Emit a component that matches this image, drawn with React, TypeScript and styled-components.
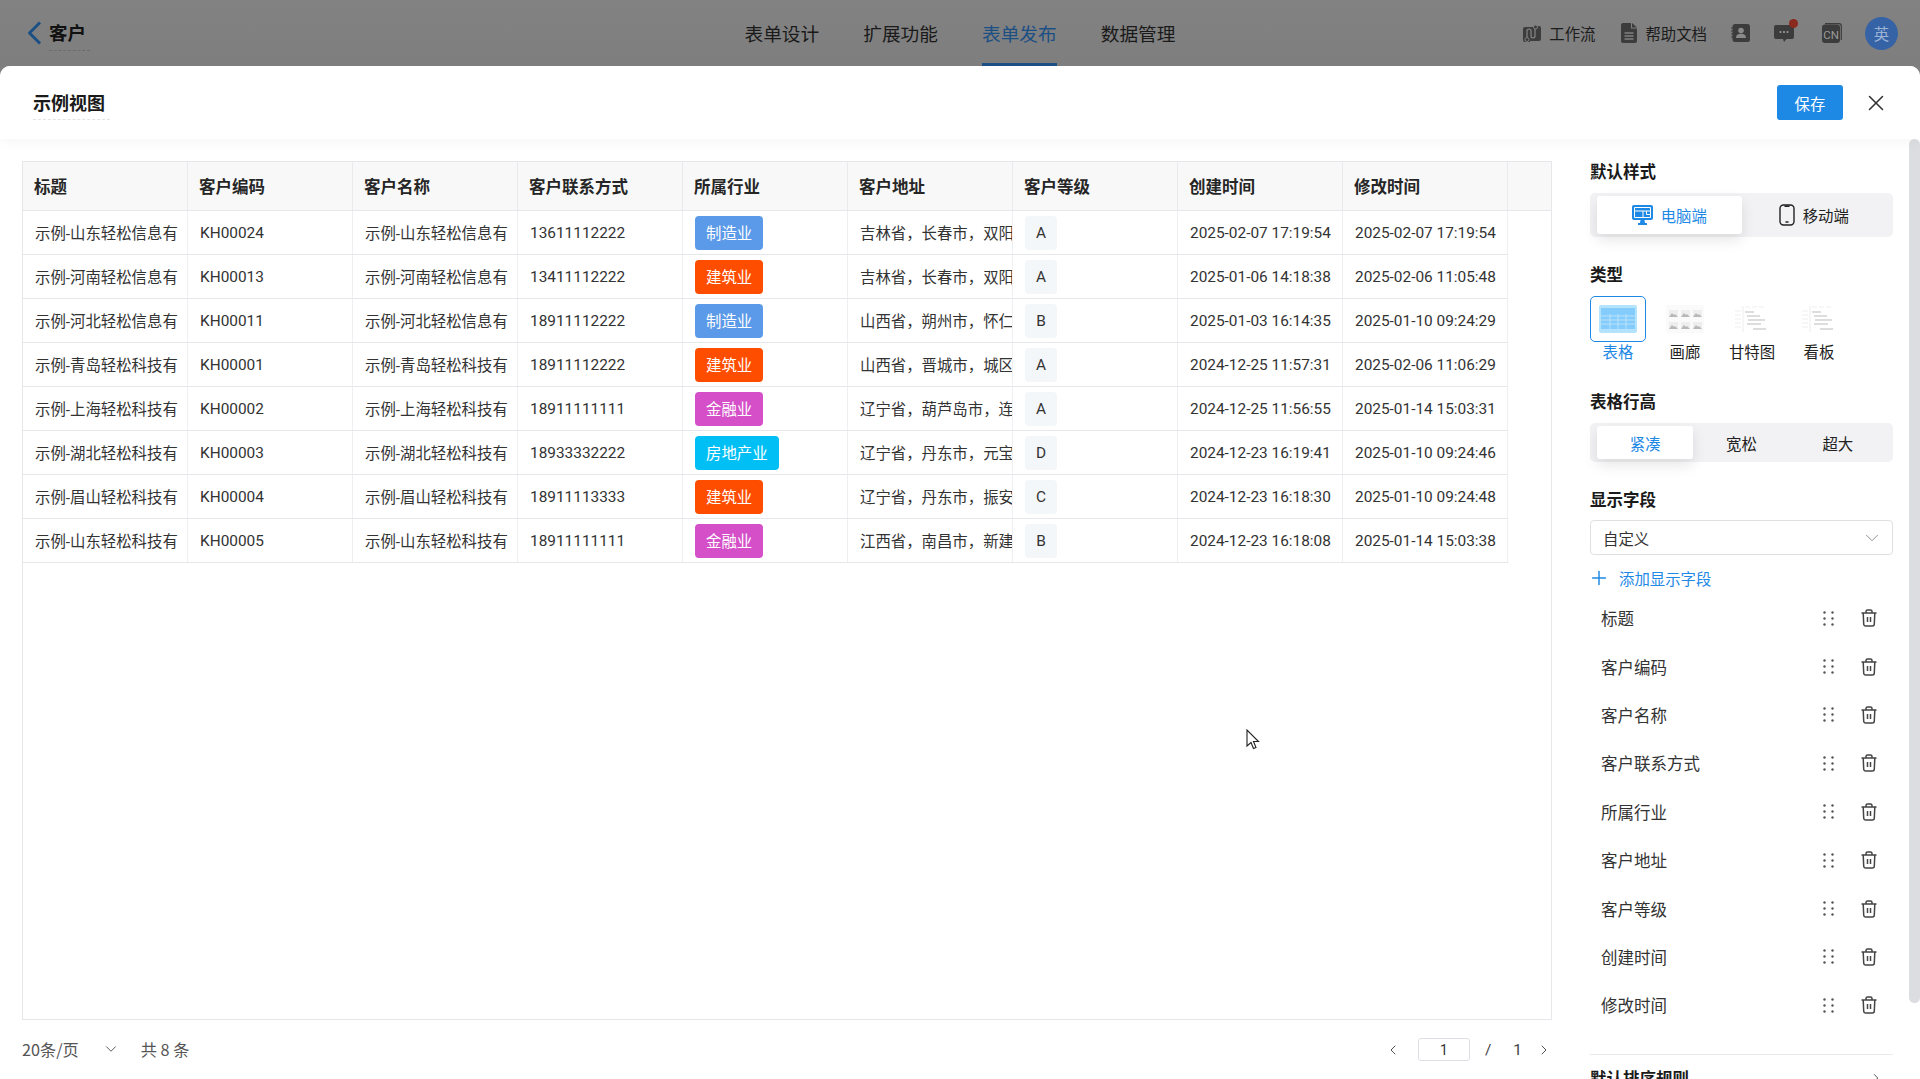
import React from 'react'
import styled, { createGlobalStyle } from 'styled-components'
import { ChevronDown, ChevronLeft, ChevronRight, Plus, X } from 'lucide-react'

// ---------- data ----------

const COLUMNS = ['标题', '客户编码', '客户名称', '客户联系方式', '所属行业', '客户地址', '客户等级', '创建时间', '修改时间']

type Row = {
  title: string
  code: string
  name: string
  phone: string
  industry: string
  address: string
  level: string
  created: string
  updated: string
}

const TAG_COLORS: Record<string, string> = {
  制造业: '#5b9ae8',
  建筑业: '#ff4d00',
  金融业: '#d44fc8',
  房地产业: '#00bff5',
}

const ROWS: Row[] = [
  { title: '示例-山东轻松信息有', code: 'KH00024', name: '示例-山东轻松信息有', phone: '13611112222', industry: '制造业', address: '吉林省，长春市，双阳区', level: 'A', created: '2025-02-07 17:19:54', updated: '2025-02-07 17:19:54' },
  { title: '示例-河南轻松信息有', code: 'KH00013', name: '示例-河南轻松信息有', phone: '13411112222', industry: '建筑业', address: '吉林省，长春市，双阳区', level: 'A', created: '2025-01-06 14:18:38', updated: '2025-02-06 11:05:48' },
  { title: '示例-河北轻松信息有', code: 'KH00011', name: '示例-河北轻松信息有', phone: '18911112222', industry: '制造业', address: '山西省，朔州市，怀仁市', level: 'B', created: '2025-01-03 16:14:35', updated: '2025-01-10 09:24:29' },
  { title: '示例-青岛轻松科技有', code: 'KH00001', name: '示例-青岛轻松科技有', phone: '18911112222', industry: '建筑业', address: '山西省，晋城市，城区', level: 'A', created: '2024-12-25 11:57:31', updated: '2025-02-06 11:06:29' },
  { title: '示例-上海轻松科技有', code: 'KH00002', name: '示例-上海轻松科技有', phone: '18911111111', industry: '金融业', address: '辽宁省，葫芦岛市，连山区', level: 'A', created: '2024-12-25 11:56:55', updated: '2025-01-14 15:03:31' },
  { title: '示例-湖北轻松科技有', code: 'KH00003', name: '示例-湖北轻松科技有', phone: '18933332222', industry: '房地产业', address: '辽宁省，丹东市，元宝区', level: 'D', created: '2024-12-23 16:19:41', updated: '2025-01-10 09:24:46' },
  { title: '示例-眉山轻松科技有', code: 'KH00004', name: '示例-眉山轻松科技有', phone: '18911113333', industry: '建筑业', address: '辽宁省，丹东市，振安区', level: 'C', created: '2024-12-23 16:18:30', updated: '2025-01-10 09:24:48' },
  { title: '示例-山东轻松科技有', code: 'KH00005', name: '示例-山东轻松科技有', phone: '18911111111', industry: '金融业', address: '江西省，南昌市，新建区', level: 'B', created: '2024-12-23 16:18:08', updated: '2025-01-14 15:03:38' },
]

// ---------- global ----------

const GlobalStyle = createGlobalStyle`
  html, body {
    margin: 0;
    height: 100%;
    overflow: hidden;
  }
  body {
    font-family: Roboto, "Noto Sans CJK SC", sans-serif;
    color: #333;
    background: #fff;
  }
  * {
    box-sizing: border-box;
  }
`

const Page = styled.div`
  position: relative;
  display: flex;
  flex-direction: column;
  height: 1079px;
  overflow: hidden;
  background: #808080;
`

// ---------- top bar (dimmed behind the drawer) ----------

const TopBar = styled.header`
  display: grid;
  grid-template-columns: 1fr auto 1fr;
  align-items: center;
  flex: 0 0 66px;
  padding: 0 22px;
  background: linear-gradient(#828282, #7e7e7e);
  color: #1a1a1a;
`

const BackLink = styled.div`
  display: flex;
  align-items: center;
  gap: 7px;
  padding-left: 5px;
  color: #1c4f84;
`

const AppName = styled.span`
  min-width: 41px;
  margin-top: 7px;
  padding-bottom: 3px;
  border-bottom: 1px dashed #6c6c6c;
  font-size: 18.5px;
  font-weight: 700;
  line-height: 25px;
  color: #111;
`

const Tabs = styled.nav`
  display: flex;
  gap: 44px;
  height: 66px;
`

const Tab = styled.div<{ $active?: boolean }>`
  display: flex;
  align-items: center;
  height: 66px;
  padding-top: 2px;
  border-bottom: 3px solid ${(p) => (p.$active ? '#1c4f84' : 'transparent')};
  font-size: 18.7px;
  color: ${(p) => (p.$active ? '#1c4f84' : '#1a1a1a')};
`

const TopTools = styled.div`
  display: flex;
  align-items: center;
  justify-content: flex-end;
  color: #1c1c1c;
`

const ToolLink = styled.div<{ $gap: number }>`
  display: flex;
  align-items: center;
  gap: 8px;
  margin-right: ${(p) => p.$gap}px;
  font-size: 15.4px;
`

const ToolIcon = styled.div<{ $gap: number }>`
  position: relative;
  display: flex;
  margin-right: ${(p) => p.$gap}px;
`

const RedDot = styled.span`
  position: absolute;
  top: -6px;
  right: -4px;
  width: 9px;
  height: 9px;
  border-radius: 50%;
  background: #8a2a1e;
`

const Avatar = styled.div`
  display: flex;
  align-items: center;
  justify-content: center;
  width: 33px;
  height: 33px;
  border-radius: 50%;
  background: #3663a6;
  color: #9db3d6;
  font-size: 15.4px;
`

// ---------- drawer ----------

const Drawer = styled.main`
  display: flex;
  flex-direction: column;
  flex: 1;
  min-height: 0;
  border-radius: 10px 10px 0 0;
  background: #fff;
  overflow: hidden;
`

const DrawerHeader = styled.div`
  position: relative;
  z-index: 1;
  display: flex;
  align-items: center;
  justify-content: space-between;
  flex: 0 0 73px;
  padding: 0 33px;
  background: #fff;
  box-shadow: 0 3px 12px rgba(0, 0, 0, 0.04);
`

const DrawerTitle = styled.h1`
  min-width: 77px;
  margin: 5px 0 0;
  padding-bottom: 2px;
  border-bottom: 1px dashed #e3e3e3;
  font-size: 18px;
  font-weight: 700;
  line-height: 26px;
  color: #1a1a1a;
`

const HeaderActions = styled.div`
  display: flex;
  align-items: center;
  gap: 20px;
  margin-right: -2px;
  color: #333;
`

const SaveButton = styled.button`
  width: 66px;
  height: 35px;
  border: 0;
  border-radius: 3px;
  background: #1e88e5;
  color: #fff;
  font: inherit;
  font-size: 15.4px;
`

const DrawerBody = styled.div`
  position: relative;
  display: flex;
  flex: 1;
  min-height: 0;
`

// ---------- table ----------

const TableArea = styled.section`
  display: flex;
  flex-direction: column;
  flex: 0 0 1530px;
  margin-left: 22px;
  padding-top: 22px;
`

const TableFrame = styled.div`
  height: 860px;
  border: 1px solid #e6e7ea;
`

const HeadRow = styled.div`
  display: flex;
  height: 49px;
  border-bottom: 1px solid #e6e7ea;
  background: #f8f8f8;
`

const HeadCell = styled.div`
  display: flex;
  align-items: center;
  flex: 0 0 165px;
  padding: 0 0 1px 11px;
  border-right: 1px solid #e9eaec;
  font-size: 16.5px;
  font-weight: 700;
  color: #262626;
`

const BodyRow = styled.div`
  display: flex;
  width: 1485px;
  height: 44px;
  border-bottom: 1px solid #e6e7ea;
`

const Cell = styled.div`
  display: flex;
  align-items: center;
  flex: 0 0 165px;
  padding-left: 12px;
  border-right: 1px solid #eeeff1;
  overflow: hidden;
  font-size: 15.4px;
  white-space: nowrap;
  color: #333;
`

// Chinese glyphs sit a little low in the line box
const TextCell = styled(Cell)`
  padding-bottom: 2px;
`

const Tag = styled.span<{ $color: string }>`
  display: flex;
  align-items: center;
  height: 34px;
  padding: 0 11px 2px;
  border-radius: 4px;
  background: ${(p) => p.$color};
  color: #fff;
`

const LevelTag = styled.span`
  display: flex;
  align-items: center;
  justify-content: center;
  width: 32px;
  height: 34px;
  border-radius: 4px;
  background: #f4f7fa;
  color: #333;
`

const TableFooter = styled.div`
  display: flex;
  align-items: center;
  justify-content: space-between;
  height: 59px;
  font-size: 16.2px;
  color: #555;
`

const FooterLeft = styled.div`
  display: flex;
  align-items: center;
  padding-bottom: 2px;
  font-family: "Noto Sans CJK SC", sans-serif;
`

const PageSize = styled.div`
  display: flex;
  align-items: center;
  gap: 23px;
  margin-right: 21px;
`

const Pager = styled.div`
  display: flex;
  align-items: center;
  color: #444;
`

const PagerInput = styled.div`
  display: flex;
  align-items: center;
  justify-content: center;
  width: 52px;
  height: 23px;
  margin: 0 15px 0 17px;
  border: 1px solid #dddfe5;
  border-radius: 3px;
  color: #333;
  font-size: 14px;
`

const PagerText = styled.span`
  font-size: 15.4px;
`

const PagerTotal = styled(PagerText)`
  margin: 0 14px 0 22px;
`

// ---------- side panel ----------

const SidePanel = styled.aside`
  flex: 1;
  height: 100%;
  padding: 22px 27px 0 38px;
  overflow: hidden;
  font-family: Inter, "Noto Sans CJK SC", sans-serif;
`

const ScrollThumb = styled.div`
  position: absolute;
  top: 0;
  right: 0;
  width: 11px;
  height: 864px;
  border-radius: 6px;
  background: #dcdde0;
`

const SectionTitle = styled.h3`
  margin: 0 0 10px;
  font-size: 16.5px;
  font-weight: 700;
  line-height: 22px;
  color: #1a1a1a;
`

const Segment = styled.div<{ $height: number; $columns: number }>`
  display: grid;
  grid-template-columns: repeat(${(p) => p.$columns}, 1fr);
  height: ${(p) => p.$height}px;
  margin-bottom: 27px;
  padding: 3px 7px;
  border-radius: 5px;
  background: #f2f2f4;
`

const SegmentItem = styled.div<{ $active?: boolean }>`
  display: flex;
  align-items: center;
  justify-content: center;
  gap: 8px;
  border-radius: 3px;
  background: ${(p) => (p.$active ? '#fff' : 'transparent')};
  box-shadow: ${(p) => (p.$active ? '0 6px 14px rgba(0, 0, 0, 0.1)' : 'none')};
  color: ${(p) => (p.$active ? '#1e88e5' : '#222')};
  font-size: 15.4px;
`

const TypeGrid = styled.div`
  display: grid;
  grid-template-columns: repeat(4, 56px);
  gap: 11px;
  margin-bottom: 27px;
`

const TypeItem = styled.div<{ $active?: boolean }>`
  display: flex;
  flex-direction: column;
  align-items: center;
  color: ${(p) => (p.$active ? '#1e88e5' : '#222')};
  font-size: 15.4px;
  line-height: 22px;
  white-space: nowrap;
`

const TypeCard = styled.div<{ $active?: boolean }>`
  display: flex;
  align-items: center;
  justify-content: center;
  width: 56px;
  height: 46px;
  border: 1px solid ${(p) => (p.$active ? '#1e88e5' : 'transparent')};
  border-radius: 5px;
`

const SelectBox = styled.div`
  display: flex;
  align-items: center;
  justify-content: space-between;
  height: 35px;
  margin-top: -1px;
  padding: 0 9px 0 12px;
  border: 1px solid #dfe0e4;
  border-radius: 4px;
  font-size: 15.4px;
  color: #333;
`

const AddField = styled.div`
  display: flex;
  align-items: center;
  gap: 9px;
  height: 33px;
  margin: 6px 0 0 -2px;
  color: #1e88e5;
  font-size: 15.4px;
`

const FieldRow = styled.div`
  display: flex;
  align-items: center;
  height: 48.4px;
  padding: 0 16px 0 11px;
  font-size: 16.5px;
  color: #333;
`

const FieldName = styled.span`
  flex: 1;
`

const HandleIcon = styled.svg`
  margin-right: 27px;
`

const Divider = styled.div`
  height: 1px;
  margin-top: 24px;
  background: #e9eaed;
`

const Collapse = styled.div`
  display: flex;
  align-items: center;
  justify-content: space-between;
  height: 46px;
  padding-right: 10px;
  color: #1a1a1a;
  font-size: 16.5px;
  font-weight: 700;
`

// ---------- free-floating mouse pointer in the shot ----------

const Pointer = styled.svg`
  position: absolute;
  left: 1245px;
  top: 729px;
`

// ---------- drawings ----------

const BackChevron = () => (
  <svg width="15" height="24" viewBox="0 0 15 24">
    <path d="M13 1.500L2.500 12 13 22.500" fill="none" stroke="currentColor" strokeWidth="3" strokeLinejoin="round" />
  </svg>
)

const WorkflowIcon = () => (
  <svg width="18" height="19" viewBox="0 0 18 19">
    <path d="M2 3h9v-1h5a2 2 0 0 1 2 2v11a2 2 0 0 1-2 2H7v1H2a2 2 0 0 1-2-2V5a2 2 0 0 1 2-2z" fill="#3c3c3c" />
    <path d="M4 15V7c0-2.500 4-2.500 4 0v5c0 2.500 4 2.500 4 0V4.500" fill="none" stroke="#808080" strokeWidth="1.300" />
    <circle cx="12.500" cy="3" r="2" fill="#3c3c3c" stroke="#808080" strokeWidth="1" />
    <circle cx="4" cy="15.500" r="2" fill="#3c3c3c" stroke="#808080" strokeWidth="1" />
  </svg>
)

const DocIcon = () => (
  <svg width="16" height="20" viewBox="0 0 16 20">
    <path d="M2 0h8v5.500h6V18a2 2 0 0 1-2 2H2a2 2 0 0 1-2-2V2a2 2 0 0 1 2-2z" fill="#3c3c3c" />
    <path d="M11 0l5 4.500h-5z" fill="#3c3c3c" />
    <path d="M3.500 10h9M3.500 13h9M3.500 16h9" stroke="#808080" strokeWidth="1.500" />
  </svg>
)

const ContactIcon = () => (
  <svg width="19" height="18" viewBox="0 0 19 18">
    <rect x="1.500" y="0" width="17.500" height="18" rx="2.500" fill="#3c3c3c" />
    <circle cx="10" cy="6.500" r="2.800" fill="#8a8a8a" />
    <path d="M5 14c0-3 2.200-4.200 5-4.200s5 1.200 5 4.200z" fill="#8a8a8a" />
    <path d="M0 4h3M0 7h3M0 10h3M0 13h3" stroke="#3c3c3c" strokeWidth="1.200" />
  </svg>
)

const ChatIcon = () => (
  <svg width="20" height="17" viewBox="0 0 20 17">
    <path d="M2 0h16a2 2 0 0 1 2 2v10a2 2 0 0 1-2 2h-5.500L10 17l-1-3H2a2 2 0 0 1-2-2V2a2 2 0 0 1 2-2z" fill="#3c3c3c" />
    <circle cx="6.500" cy="7" r="1.100" fill="#9a9a9a" />
    <circle cx="10" cy="7" r="1.100" fill="#9a9a9a" />
    <circle cx="13.500" cy="7" r="1.100" fill="#9a9a9a" />
  </svg>
)

const LangIcon = () => (
  <svg width="20" height="20" viewBox="0 0 20 20">
    <rect x="0" y="1.500" width="18" height="18.500" rx="3" fill="#3c3c3c" />
    <path d="M3 0.700h14a2.300 2.300 0 0 1 2.300 2.300v14" fill="none" stroke="#3c3c3c" strokeWidth="1.200" />
    <text x="9" y="15.500" textAnchor="middle" fontSize="11.500" fontFamily="Roboto, sans-serif" fill="#9a9a9a">
      CN
    </text>
  </svg>
)

const DesktopIcon = () => (
  <svg width="21" height="20" viewBox="0 0 21 20">
    <rect x="0" y="0" width="21" height="15" rx="2" fill="#1e88e5" />
    <path d="M2.500 2.500h16v10h-16zM2.500 6h16M11 6v6.500M14.500 6v3.500h4" fill="none" stroke="#fff" strokeWidth="1" />
    <path d="M8.500 15h4l0.500 3h2v2H6v-2h2z" fill="#1e88e5" />
  </svg>
)

const PhoneIcon = () => (
  <svg width="16" height="22" viewBox="0 0 16 22">
    <rect x="1" y="1" width="14" height="20" rx="3.500" fill="none" stroke="#222" strokeWidth="1.400" />
    <path d="M5.500 1.500h5V3h-5z" fill="#222" />
    <path d="M6.500 18h3" stroke="#222" strokeWidth="1.600" />
  </svg>
)

const TableThumb = () => (
  <svg width="38" height="28" viewBox="0 0 38 28">
    <rect width="38" height="28" rx="2" fill="#b3e3fd" />
    <rect x="2" y="3" width="34" height="21" fill="#84ccfb" />
    <path d="M2 11h34M2 15h34M2 19h34M11 9v15M19 9v15M27 9v15" stroke="#c6e8fd" strokeWidth="0.800" />
  </svg>
)

const GalleryThumb = () => (
  <svg width="38" height="28" viewBox="0 0 38 28">
    <rect width="38" height="28" rx="2" fill="#fafafa" />
    {[3, 15, 27].map((x) =>
      [5, 17].map((y) => (
        <g key={`${x}-${y}`}>
          <rect x={x} y={y} width="9" height="7" fill="#eeeeee" />
          <path d={`M${x} ${y + 7}l3-4 2 2 1-1 3 3z`} fill="#b8b8b8" />
        </g>
      )),
    )}
  </svg>
)

const GanttThumb = () => (
  <svg width="36" height="28" viewBox="0 0 36 28">
    <path d="M9 1v26" stroke="#ededed" strokeWidth="1" />
    <path d="M1 6h6M1 10h6M1 14h6M1 18h6M1 22h6M11 2h5M18 2h5M25 2h5" stroke="#efefef" strokeWidth="1" />
    <path d="M11 7h9M13 11h13M14 15h17M13 19h14M19 24h13" stroke="#d2d2d2" strokeWidth="1.500" />
  </svg>
)

const DragHandle = () => (
  <HandleIcon width="11" height="15" viewBox="0 0 11 15">
    {[1.500, 9.500].map((x) =>
      [1.500, 7.500, 13.500].map((y) => <circle key={`${x}-${y}`} cx={x} cy={y} r="1.200" fill="#555" />),
    )}
  </HandleIcon>
)

const TrashIcon = () => (
  <svg width="16" height="18" viewBox="0 0 16 18">
    <path
      d="M0.500 4h15M5 4V2.500A1.500 1.500 0 0 1 6.500 1h3A1.500 1.500 0 0 1 11 2.500V4M2.200 4l0.500 11a2 2 0 0 0 2 2h6.600a2 2 0 0 0 2-2l0.500-11M6.500 8v5M9.500 8v5"
      fill="none"
      stroke="#444"
      strokeWidth="1.500"
    />
  </svg>
)

export default function App() {
  return (
    <>
      <GlobalStyle />
      <Page>
        <TopBar>
          <BackLink>
            <BackChevron />
            <AppName>客户</AppName>
          </BackLink>
          <Tabs>
            <Tab>表单设计</Tab>
            <Tab>扩展功能</Tab>
            <Tab $active>表单发布</Tab>
            <Tab>数据管理</Tab>
          </Tabs>
          <TopTools>
            <ToolLink $gap={26}>
              <WorkflowIcon />
              工作流
            </ToolLink>
            <ToolLink $gap={24}>
              <DocIcon />
              帮助文档
            </ToolLink>
            <ToolIcon $gap={24}>
              <ContactIcon />
            </ToolIcon>
            <ToolIcon $gap={28}>
              <ChatIcon />
              <RedDot />
            </ToolIcon>
            <ToolIcon $gap={23}>
              <LangIcon />
            </ToolIcon>
            <Avatar>英</Avatar>
          </TopTools>
        </TopBar>

        <Drawer>
          <DrawerHeader>
            <DrawerTitle>示例视图</DrawerTitle>
            <HeaderActions>
              <SaveButton>保存</SaveButton>
              <X size={26} strokeWidth={1.4} />
            </HeaderActions>
          </DrawerHeader>

          <DrawerBody>
            <TableArea>
              <TableFrame>
                <HeadRow>
                  {COLUMNS.map((c) => (
                    <HeadCell key={c}>{c}</HeadCell>
                  ))}
                </HeadRow>
                {ROWS.map((r) => (
                  <BodyRow key={r.code}>
                    <TextCell>{r.title}</TextCell>
                    <Cell>{r.code}</Cell>
                    <TextCell>{r.name}</TextCell>
                    <Cell>{r.phone}</Cell>
                    <Cell>
                      <Tag $color={TAG_COLORS[r.industry]}>{r.industry}</Tag>
                    </Cell>
                    <TextCell>{r.address}</TextCell>
                    <Cell>
                      <LevelTag>{r.level}</LevelTag>
                    </Cell>
                    <Cell>{r.created}</Cell>
                    <Cell>{r.updated}</Cell>
                  </BodyRow>
                ))}
              </TableFrame>

              <TableFooter>
                <FooterLeft>
                  <PageSize>
                    20条/页
                    <ChevronDown size={18} strokeWidth={1.3} />
                  </PageSize>
                  <span>共 8 条</span>
                </FooterLeft>
                <Pager>
                  <ChevronLeft size={16} strokeWidth={1.4} />
                  <PagerInput>1</PagerInput>
                  <PagerText>/</PagerText>
                  <PagerTotal>1</PagerTotal>
                  <ChevronRight size={16} strokeWidth={1.4} />
                </Pager>
              </TableFooter>
            </TableArea>

            <SidePanel>
              <SectionTitle>默认样式</SectionTitle>
              <Segment $height={44} $columns={2}>
                <SegmentItem $active>
                  <DesktopIcon />
                  电脑端
                </SegmentItem>
                <SegmentItem>
                  <PhoneIcon />
                  移动端
                </SegmentItem>
              </Segment>

              <SectionTitle>类型</SectionTitle>
              <TypeGrid>
                <TypeItem $active>
                  <TypeCard $active>
                    <TableThumb />
                  </TypeCard>
                  表格
                </TypeItem>
                <TypeItem>
                  <TypeCard>
                    <GalleryThumb />
                  </TypeCard>
                  画廊
                </TypeItem>
                <TypeItem>
                  <TypeCard>
                    <GanttThumb />
                  </TypeCard>
                  甘特图
                </TypeItem>
                <TypeItem>
                  <TypeCard>
                    <GanttThumb />
                  </TypeCard>
                  看板
                </TypeItem>
              </TypeGrid>

              <SectionTitle>表格行高</SectionTitle>
              <Segment $height={39} $columns={3}>
                <SegmentItem $active>紧凑</SegmentItem>
                <SegmentItem>宽松</SegmentItem>
                <SegmentItem>超大</SegmentItem>
              </Segment>

              <SectionTitle>显示字段</SectionTitle>
              <SelectBox>
                自定义
                <ChevronDown size={22} strokeWidth={1} color="#888" />
              </SelectBox>
              <AddField>
                <Plus size={22} strokeWidth={1.6} />
                添加显示字段
              </AddField>
              {COLUMNS.map((c) => (
                <FieldRow key={c}>
                  <FieldName>{c}</FieldName>
                  <DragHandle />
                  <TrashIcon />
                </FieldRow>
              ))}
              <Divider />
              <Collapse>
                默认排序规则
                <ChevronRight size={14} strokeWidth={1.3} />
              </Collapse>
            </SidePanel>
            <ScrollThumb />
          </DrawerBody>
        </Drawer>

        <Pointer width="16" height="22" viewBox="0 0 16 22">
          <path d="M2 1v16l4-3.500 2.500 6 2.500-1-2.500-6h5z" fill="#fff" stroke="#222" strokeWidth="1.100" />
        </Pointer>
      </Page>
    </>
  )
}
